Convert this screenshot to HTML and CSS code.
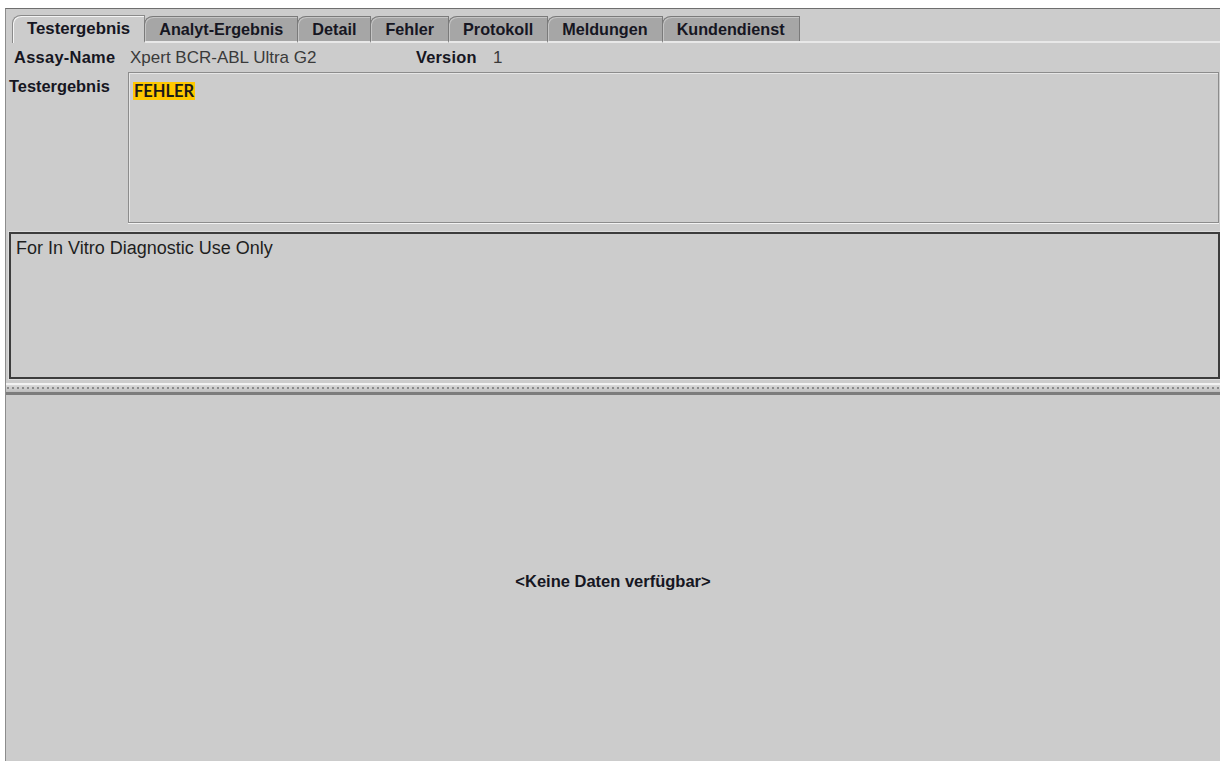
FILE: index.html
```html
<!DOCTYPE html>
<html lang="de">
<head>
<meta charset="utf-8">
<title>Testergebnis</title>
<link rel="stylesheet" href="styles.css">
</head>
<body>
<div class="window">
  <div class="tabbar">
    <div class="tab active">Testergebnis</div>
    <div class="tab">Analyt-Ergebnis</div>
    <div class="tab">Detail</div>
    <div class="tab">Fehler</div>
    <div class="tab">Protokoll</div>
    <div class="tab">Meldungen</div>
    <div class="tab">Kundendienst</div>
    <div class="tab-fill"></div>
  </div>
  <div class="top-pane">
    <div class="assay-row">
      <span class="label assay-label">Assay-Name</span>
      <span class="value assay-value">Xpert BCR-ABL Ultra G2</span>
      <span class="label version-label">Version</span>
      <span class="value">1</span>
    </div>
    <div class="result-row">
      <span class="label result-label">Testergebnis</span>
      <div class="result-box"><span class="badge">FEHLER</span></div>
    </div>
    <div class="notice-box">For In Vitro Diagnostic Use Only</div>
  </div>
  <div class="splitter"><div class="grip"></div></div>
  <div class="bottom-pane">
    <span class="empty">&lt;Keine Daten verfügbar&gt;</span>
  </div>
</div>
</body>
</html>
```
FILE: styles.css
```css
* { box-sizing: border-box; }

html, body {
  margin: 0;
  padding: 0;
  background: #ffffff;
  width: 1220px;
  height: 761px;
  overflow: hidden;
}

body {
  font-family: "Liberation Sans", Arial, sans-serif;
  color: #161622;
}

.window {
  margin: 8px 0 0 5px;
  height: 753px;
  background: #cccccc;
  border-top: 1px solid #6e6e6e;
  border-left: 1px solid #8c8c8c;
  display: flex;
  flex-direction: column;
}

/* tab strip */
.tabbar {
  height: 34px;
  display: flex;
  align-items: flex-end;
  padding-left: 6px;
}

.tab {
  height: 27px;
  padding: 0 14px;
  display: flex;
  align-items: center;
  font-weight: bold;
  font-size: 16.2px;
  background: #a6a6a6;
  border: 1px solid #7a7a7a;
  border-top-left-radius: 9px 8px;
  box-shadow: inset 1px 1px 0 #c4c4c4;
  margin-right: -1px;
  border-bottom: 2px solid #e8e8e8;
}

.tab.active {
  height: 28px;
  font-size: 16.8px;
  background: #cccccc;
  border-color: #8a8a8a;
  box-shadow: inset 1px 1px 0 #f4f4f4;
  border-bottom: none;
  padding-bottom: 2px;
}

.tab-fill {
  flex: 1;
  height: 2px;
  background: #e8e8e8;
}

/* upper pane */
.top-pane {
  height: 337px;
  display: flex;
  flex-direction: column;
}

.label {
  font-weight: bold;
  font-size: 16.4px;
}

.value {
  font-size: 17px;
  color: #3a3a3a;
}

.assay-row {
  height: 29px;
  display: flex;
  align-items: center;
  padding-left: 8px;
}

.assay-label { width: 116px; letter-spacing: 0.3px; }
.assay-value { width: 286px; }
.version-label { width: 77px; letter-spacing: 0.2px; }

.result-row {
  display: flex;
  height: 151px;
  padding-left: 3px;
}

.result-label {
  width: 119px;
  padding-top: 5px;
}

.result-box {
  flex: 1;
  margin-right: 1px;
  border: 1px solid #8c8c8c;
  box-shadow: inset 1px 1px 0 #e6e6e6, 0 1px 0 #f2f2f2;
  padding: 9px 0 0 4px;
}

.badge {
  display: inline-block;
  background: #ffc800;
  font-family: "Lato", "Liberation Sans", sans-serif;
  font-weight: bold;
  font-size: 16.5px;
  line-height: 18px;
  padding: 0 1px;
  color: #1a1a1a;
}

.notice-box {
  margin: 9px 0 0 3px;
  height: 147px;
  border: 2px solid #3c3c3c;
  box-shadow: 0 0 0 1px #dcdcdc;
  padding: 4px 0 0 5px;
  font-size: 18px;
  color: #1e1e1e;
}

/* divider between panes */
.splitter {
  height: 15px;
  padding-top: 3px;
  display: flex;
  flex-direction: column;
}

.grip {
  height: 12px;
  border-top: 2px solid #f2f2f2;
  border-bottom: 3px solid #7c7c7c;
  background:
    radial-gradient(circle at 2px 2px, #8a8a8a 0.8px, transparent 1.2px) 0 1px / 5px 5px repeat-x,
    linear-gradient(#dadada, #bdbdbd);
}

/* lower pane */
.bottom-pane {
  flex: 1;
  display: flex;
  align-items: center;
  justify-content: center;
  padding-top: 6px;
}

.empty {
  font-weight: bold;
  font-size: 16.5px;
}
```
